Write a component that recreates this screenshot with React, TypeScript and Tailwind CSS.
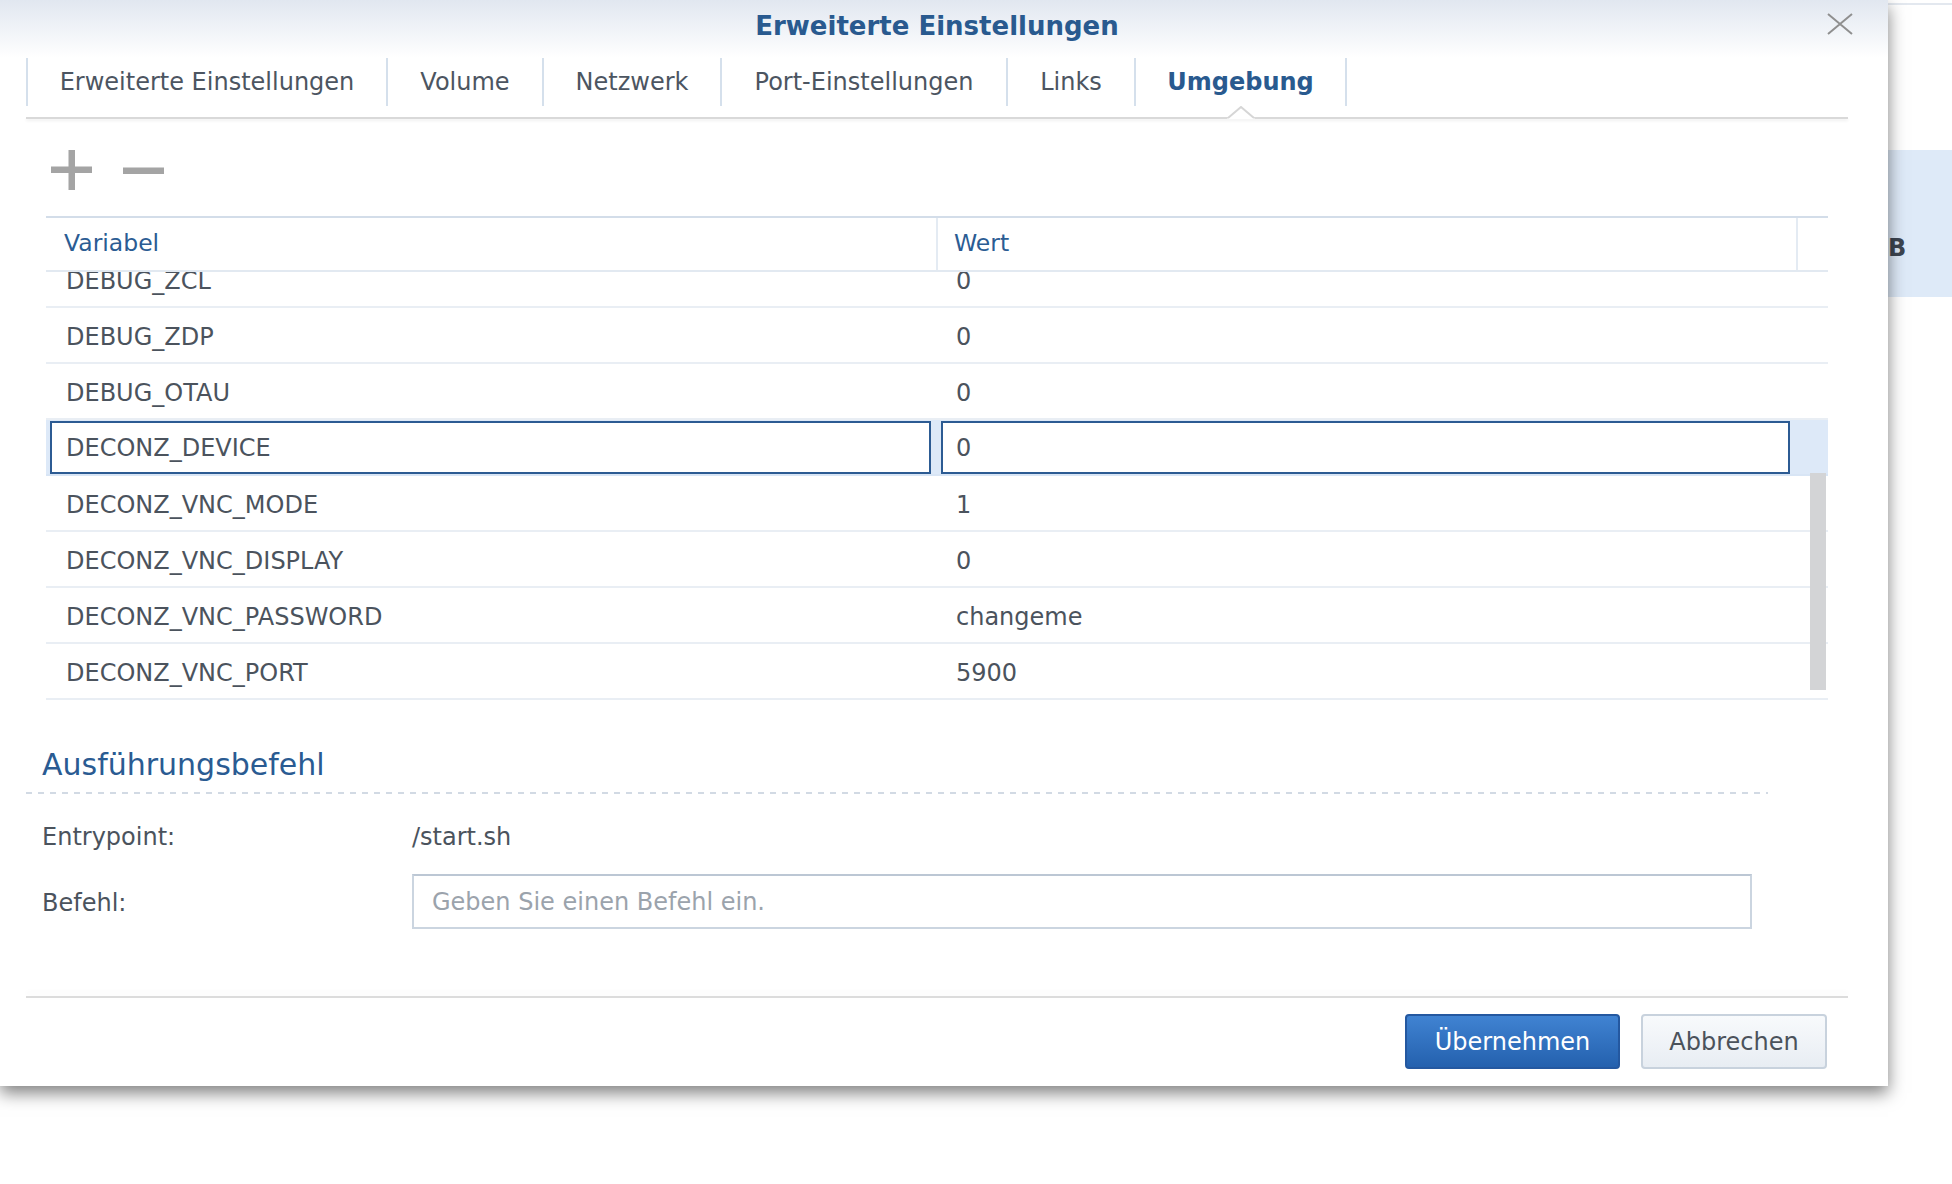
import React from 'react';

const tabs = [
  { label: 'Erweiterte Einstellungen', width: 'w-[360px]' },
  { label: 'Volume', width: 'w-[156px]' },
  { label: 'Netzwerk', width: 'w-[178px]' },
  { label: 'Port-Einstellungen', width: 'w-[286px]' },
  { label: 'Links', width: 'w-[128px]' },
  { label: 'Umgebung', width: 'w-[213px]', active: true },
];

const rows = [
  ['DEBUG_ZCL', '0'],
  ['DEBUG_ZDP', '0'],
  ['DEBUG_OTAU', '0'],
  ['DECONZ_DEVICE', '0'],
  ['DECONZ_VNC_MODE', '1'],
  ['DECONZ_VNC_DISPLAY', '0'],
  ['DECONZ_VNC_PASSWORD', 'changeme'],
  ['DECONZ_VNC_PORT', '5900'],
];

function EnvTable() {
  return (
    <div className="border-t-2 border-[#d3dde9]">
      <div className="flex h-[54px] border-b-2 border-[#e2e9f1] text-[23.5px] text-[#2b5c93]">
        <div className="flex w-[890px] items-center pl-[18px]">Variabel</div>
        <div className="flex w-[860px] items-center border-l-2 border-[#e4ebf3] pl-[16px]">Wert</div>
        <div className="flex-1 border-l-2 border-[#e4ebf3]" />
      </div>
      {/* scrolled list: first row sits partly under the header */}
      <div className="relative overflow-hidden">
        <div className="-mt-[20px]">
          {rows.map(([name, value]) =>
            name === 'DECONZ_DEVICE' ? (
              <div
                key={name}
                className="flex h-[56px] items-start border-b-2 border-[#d8e5f5] bg-[#dde9f8] pl-[4px] pt-[1px] text-[24px] text-[#4b535d]"
              >
                <div className="flex h-[53px] w-[881px] items-center border-2 border-[#2c5b93] bg-white pl-[14px]">{name}</div>
                <div className="ml-[10px] flex h-[53px] w-[849px] items-center border-2 border-[#2c5b93] bg-white pl-[13px]">{value}</div>
              </div>
            ) : (
              <div key={name} className="flex h-[56px] items-center border-b-2 border-[#e9eef4] pt-[3px] text-[24px] text-[#4b535d]">
                <div className="w-[890px] pl-[20px]">{name}</div>
                <div className="pl-[20px]">{value}</div>
              </div>
            )
          )}
        </div>
        <div className="absolute right-[2px] top-[201px] h-[217px] w-[16px] bg-[#d3d4d6]" />
      </div>
    </div>
  );
}

export default function App() {
  return (
    <div className="flex min-h-[1184px] w-full overflow-hidden bg-white font-['DejaVu_Sans',sans-serif]">
      <div className="relative z-10 flex h-[1086px] w-[1888px] shrink-0 flex-col bg-white shadow-[0_7px_16px_rgba(0,0,0,0.5)]">
        {/* title */}
        <div className="relative h-[58px] bg-linear-to-b from-[#e1e7f0] to-white">
          <div className="flex h-[52px] items-center justify-center pr-[14px] text-[26px] font-bold text-[#295a8f]">
            Erweiterte Einstellungen
          </div>
          <svg className="absolute right-[35px] top-[13px]" width="26" height="22" viewBox="0 0 26 22">
            <path d="M1 1 L25 21 M25 1 L1 21" stroke="#8f8f8f" strokeWidth="2" fill="none" />
          </svg>
        </div>

        {/* tabs */}
        <div className="ml-[26px] w-[1822px]">
          <div className="flex h-[48px] text-[24px]">
            {tabs.map((t, i) => (
              <div
                key={t.label}
                className={`relative flex ${t.width} items-center justify-center border-l-2 border-[#d5e0ec] ${
                  i === tabs.length - 1 ? 'border-r-2' : ''
                } ${t.active ? 'font-bold text-[#295a8f]' : 'text-[#4c5561]'}`}
              >
                {t.label}
                {t.active && (
                  <svg className="absolute left-1/2 top-full -translate-x-1/2" width="28" height="14" viewBox="0 0 28 14">
                    <path d="M0 13 L14 1 L28 13 Z" fill="white" />
                    <path d="M1 12 L14 1 L27 12" stroke="#d6d6d6" strokeWidth="2" fill="none" />
                  </svg>
                )}
              </div>
            ))}
          </div>
          <div className="h-[11px]" />
          <div className="h-[2px] bg-[#d9d9d9] shadow-[0_2px_3px_rgba(0,0,0,0.07)]" />
        </div>

        {/* toolbar + table */}
        <div className="ml-[46px] w-[1782px]">
          <div className="mt-[31px] flex h-[40px] items-center gap-[31px] pl-[5px]">
            <svg width="41" height="40" viewBox="0 0 41 40">
              <rect x="0" y="16.5" width="41" height="6.5" fill="#a4a4a4" />
              <rect x="17.5" y="0" width="6.5" height="40" fill="#a4a4a4" />
            </svg>
            <svg width="41" height="7" viewBox="0 0 41 7">
              <rect x="0" y="0.5" width="41" height="6.5" fill="#a4a4a4" />
            </svg>
          </div>
          <div className="mt-[26px]">
            <EnvTable />
          </div>
        </div>

        {/* Ausführungsbefehl */}
        <div className="ml-[26px] w-[1742px]">
          <div className="mt-[47px] h-[36px] pl-[16px] text-[30px] leading-[36px] text-[#2a5b92]">Ausführungsbefehl</div>
          <div className="mt-[9px] h-[2px] bg-[repeating-linear-gradient(90deg,#d2dae4_0_6px,transparent_6px_12px)]" />
          <div className="mt-[23px] grid h-[40px] grid-cols-[386px_1fr] items-center text-[24px] text-[#4b535d]">
            <div className="pl-[16px]">Entrypoint:</div>
            <div>/start.sh</div>
          </div>
          <div className="mt-[17px] grid grid-cols-[386px_1fr] items-center text-[24px] text-[#4b535d]">
            <div className="pl-[16px] pt-[3px]">Befehl:</div>
            <input
              className="h-[55px] w-[1340px] border-2 border-[#cbd5e0] border-t-[#bcc7d4] bg-white pl-[18px] text-[24px] text-[#4b535d] outline-none placeholder:text-[#9ba3ac]"
              placeholder="Geben Sie einen Befehl ein."
            />
          </div>
        </div>

        {/* footer */}
        <div className="ml-[26px] mt-[67px] h-[2px] w-[1822px] bg-[#dcdcdc] shadow-[0_-4px_5px_rgba(0,0,0,0.04)]" />
        <div className="mt-[16px] flex justify-end gap-[21px] pr-[61px] text-[24px]">
          <button className="h-[55px] w-[215px] rounded-[4px] border-2 border-[#2458a0] bg-linear-to-b from-[#4083d2] to-[#2461ae] text-white">
            Übernehmen
          </button>
          <button className="h-[55px] w-[186px] rounded-[4px] border-2 border-[#c8d2dd] bg-linear-to-b from-[#f8fafc] to-[#e8edf3] text-[#4b525b]">
            Abbrechen
          </button>
        </div>
      </div>

      {/* background window behind the dialog */}
      <div className="flex flex-1 flex-col">
        <div className="mt-[3px] h-[2px] bg-[#e3e8ef]" />
        <div className="mt-[145px] h-[147px] bg-[#deeaf8] pt-[84px] text-[24px] font-bold leading-[28px] text-[#3d4550]">
          B
        </div>
      </div>
    </div>
  );
}
